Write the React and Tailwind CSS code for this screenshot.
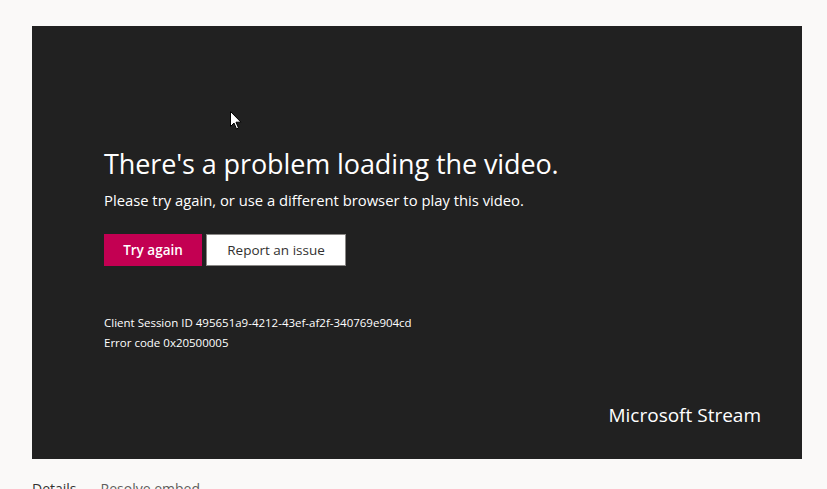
export default function App() {
  return (
    <div className="w-[827px] h-[489px] overflow-hidden bg-[#faf9f8] pt-[26px] pl-[32px] font-['Segoe_UI','Open_Sans',sans-serif]">
      <div className="relative w-[770px] h-[433px] bg-[#212121] text-white flex flex-col pl-[72px]">
        <svg className="absolute left-[198px] top-[85px]" width="12" height="19" viewBox="0 0 12 19">
          <path d="M0.5 0.5 L0.5 15.5 L4 12 L6.5 18 L8.5 17 L6 11.2 L11 11.2 Z" fill="#fff" stroke="#000" strokeWidth="1" />
        </svg>
        <h1 className="mt-[121px] text-[27px] leading-[34px] tracking-[-0.1px]">There's a problem loading the video.</h1>
        <p className="mt-[9px] text-[14.8px] leading-[20px]">Please try again, or use a different browser to play this video.</p>
        <div className="mt-[24px] flex gap-[4px]">
          <button className="w-[98px] h-[32px] bg-[#c30052] text-white text-[13.5px] font-semibold">Try again</button>
          <button className="w-[140px] h-[32px] bg-white text-[#323130] text-[13.5px] border border-[#8a8886]">Report an issue</button>
        </div>
        <div className="mt-[47px] text-[11.5px] leading-[20px]">
          <div>Client Session ID 495651a9-4212-43ef-af2f-340769e904cd</div>
          <div>Error code 0x20500005</div>
        </div>
        <div className="mt-auto mb-[32px] self-end mr-[41px] text-[19px] leading-[24px]">Microsoft Stream</div>
      </div>
      <div className="mt-[21px] flex gap-[24px] text-[14px] leading-[18px]">
        <span className="text-[#323130]">Details</span>
        <span className="text-[#605e5c]">Resolve embed</span>
      </div>
    </div>
  )
}
